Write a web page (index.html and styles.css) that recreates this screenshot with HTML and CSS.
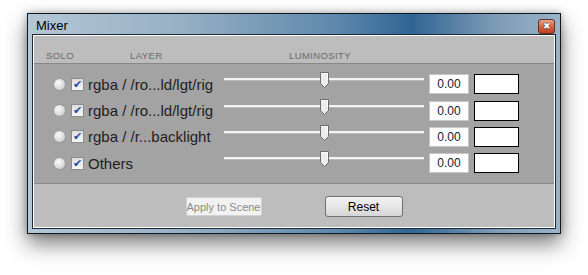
FILE: index.html
```html
<!DOCTYPE html>
<html lang="en">

<head>
    <meta charset="UTF-8">
    <title>Mixer</title>
    <link rel="stylesheet" href="styles.css">
</head>

<body>
    <div class="window">
        <div class="titlebar">
            <span class="title">Mixer</span>
            <span class="close">&#x2716;</span>
        </div>
        <div class="client">
            <div class="head">
                <span class="col-solo">SOLO</span>
                <span class="col-layer">LAYER</span>
                <span class="col-lum">LUMINOSITY</span>
            </div>
            <div class="rows">
                <div class="row">
                    <span class="radio"></span>
                    <span class="check">&#x2714;</span>
                    <span class="name">rgba / /ro...ld/lgt/rig</span>
                    <div class="slider"><span class="track"></span><span class="ticks"></span>
                        <svg class="thumb" width="9" height="16" viewBox="0 0 9 16"><path d="M0.5 0.5 H8.5 V11.5 L4.5 15.5 L0.5 11.5 Z" fill="#ececec" stroke="#6c6c6c"/><path d="M1.5 1.5 H7.5 V8" stroke="#fff" fill="none"/></svg>
                    </div>
                    <span class="value">0.00</span>
                    <span class="swatch"></span>
                </div>
                <div class="row">
                    <span class="radio"></span>
                    <span class="check">&#x2714;</span>
                    <span class="name">rgba / /ro...ld/lgt/rig</span>
                    <div class="slider"><span class="track"></span><span class="ticks"></span>
                        <svg class="thumb" width="9" height="16" viewBox="0 0 9 16"><path d="M0.5 0.5 H8.5 V11.5 L4.5 15.5 L0.5 11.5 Z" fill="#ececec" stroke="#6c6c6c"/><path d="M1.5 1.5 H7.5 V8" stroke="#fff" fill="none"/></svg>
                    </div>
                    <span class="value">0.00</span>
                    <span class="swatch"></span>
                </div>
                <div class="row">
                    <span class="radio"></span>
                    <span class="check">&#x2714;</span>
                    <span class="name">rgba / /r...backlight</span>
                    <div class="slider"><span class="track"></span><span class="ticks"></span>
                        <svg class="thumb" width="9" height="16" viewBox="0 0 9 16"><path d="M0.5 0.5 H8.5 V11.5 L4.5 15.5 L0.5 11.5 Z" fill="#ececec" stroke="#6c6c6c"/><path d="M1.5 1.5 H7.5 V8" stroke="#fff" fill="none"/></svg>
                    </div>
                    <span class="value">0.00</span>
                    <span class="swatch"></span>
                </div>
                <div class="row">
                    <span class="radio"></span>
                    <span class="check">&#x2714;</span>
                    <span class="name">Others</span>
                    <div class="slider"><span class="track"></span><span class="ticks"></span>
                        <svg class="thumb" width="9" height="16" viewBox="0 0 9 16"><path d="M0.5 0.5 H8.5 V11.5 L4.5 15.5 L0.5 11.5 Z" fill="#ececec" stroke="#6c6c6c"/><path d="M1.5 1.5 H7.5 V8" stroke="#fff" fill="none"/></svg>
                    </div>
                    <span class="value">0.00</span>
                    <span class="swatch"></span>
                </div>
            </div>
            <div class="footer">
                <button type="button" class="btn disabled">Apply to Scene</button>
                <button type="button" class="btn">Reset</button>
            </div>
        </div>
    </div>
</body>

</html>
```

FILE: styles.css
```css
html {
    background: #fff;
}

body {
    margin: 0;
    padding: 13px 0 0 27px;
    min-height: 275px;
    box-sizing: border-box;
    background: #fff;
    font-family: 'Liberation Sans', Arial, sans-serif;
}

.window {
    width: 532px;
    height: 219px;
    border: 1px solid #0d1a24;
    background: linear-gradient(90deg, #b3c7d6 0%, #98b1c5 28%, #5e88ac 58%, #2f6594 72%, #7e9cb6 88%, #9ab3c7 100%);
    box-shadow: 0 10px 20px rgba(0, 0, 0, 0.5), 0 0 7px rgba(0, 0, 0, 0.3);
    display: flex;
    flex-direction: column;
}

.titlebar {
    height: 21px;
    display: flex;
    align-items: center;
    justify-content: space-between;
    padding: 0 5px 0 8px;
}

.title {
    font-size: 13px;
    color: #000;
    padding-top: 1px;
}

.close {
    width: 15px;
    height: 13px;
    border: 1px solid #5e3328;
    border-radius: 3px;
    background: linear-gradient(#eba48c, #d9613f 50%, #c1411f);
    color: #fff;
    font-size: 9px;
    line-height: 13px;
    text-align: center;
    text-shadow: 0 0 1px #222, 0 0 1px #222;
    margin-top: 3px;
}

.client {
    flex: 1;
    margin: 0 5px 5px;
    border: 1px solid #fff;
    box-shadow: 0 0 0 1px #1b2a36;
    background: #bcbdbc;
    display: flex;
    flex-direction: column;
}

.head {
    height: 27px;
    border-bottom: 1px solid #878787;
    display: flex;
    align-items: flex-end;
    font-size: 9.5px;
    color: #6b6b6b;
    letter-spacing: 0.4px;
}

.head span {
    padding-bottom: 2px;
}

.col-solo {
    padding-left: 12px;
    width: 84px;
}

.col-layer {
    width: 159px;
}

.rows {
    height: 112px;
    padding-top: 7px;
    background: #a3a3a3;
    border-bottom: 1px solid #8b8b8b;
}

.row {
    height: 26.4px;
    display: flex;
    align-items: center;
    padding-left: 19px;
}

.radio {
    width: 11px;
    height: 11px;
    border: 1px solid #9a9a9a;
    border-radius: 50%;
    background: radial-gradient(circle at 40% 35%, #fafafa, #d4d4d4 70%, #c4c4c4);
    margin-right: 5px;
}

.check {
    width: 11px;
    height: 11px;
    border: 1px solid #8c8c8c;
    background: linear-gradient(#dedede, #f6f6f6);
    color: #2a4aa6;
    font-size: 11px;
    line-height: 11px;
    text-align: center;
    margin-right: 4px;
}

.name {
    width: 136px;
    font-size: 15px;
    color: #1e1e1e;
    white-space: nowrap;
}

.slider {
    position: relative;
    width: 200px;
    height: 26px;
}

.track {
    position: absolute;
    left: 0;
    right: 0;
    top: 7px;
    height: 2px;
    background: #f4f4f4;
    border-bottom: 1px solid #b9b9b9;
}

.ticks {
    position: absolute;
    left: 24px;
    right: 24px;
    top: 19px;
    height: 2px;
    background: repeating-linear-gradient(90deg, #a8a88e 0 1px, transparent 1px 38px);
}

.thumb {
    position: absolute;
    left: 96px;
    top: 1px;
}

.value {
    width: 38px;
    height: 18px;
    margin-left: 5px;
    border: 1px solid #c6c6c6;
    background: #fff;
    font-size: 12px;
    line-height: 18px;
    text-align: center;
    color: #101a34;
}

.swatch {
    width: 43px;
    height: 18px;
    margin-left: 5px;
    border: 1px solid #000;
    background: #fff;
}

.footer {
    flex: 1;
    display: flex;
    align-items: center;
    justify-content: center;
    gap: 63px;
    padding-top: 2px;
}

.btn {
    font-family: 'Liberation Sans', Arial, sans-serif;
    font-size: 12px;
    height: 21px;
    width: 78px;
    padding: 0;
    white-space: nowrap;
    border: 1px solid #707070;
    border-radius: 3px;
    background: linear-gradient(#f3f3f3, #e6e6e6 50%, #d6d6d6);
    color: #000;
}

.btn.disabled {
    width: 76px;
    height: 19px;
    font-size: 11px;
    border-color: #d2d2d2;
    border-radius: 2px;
    background: #f2f2f2;
    color: #8a8a8a;
}
```
